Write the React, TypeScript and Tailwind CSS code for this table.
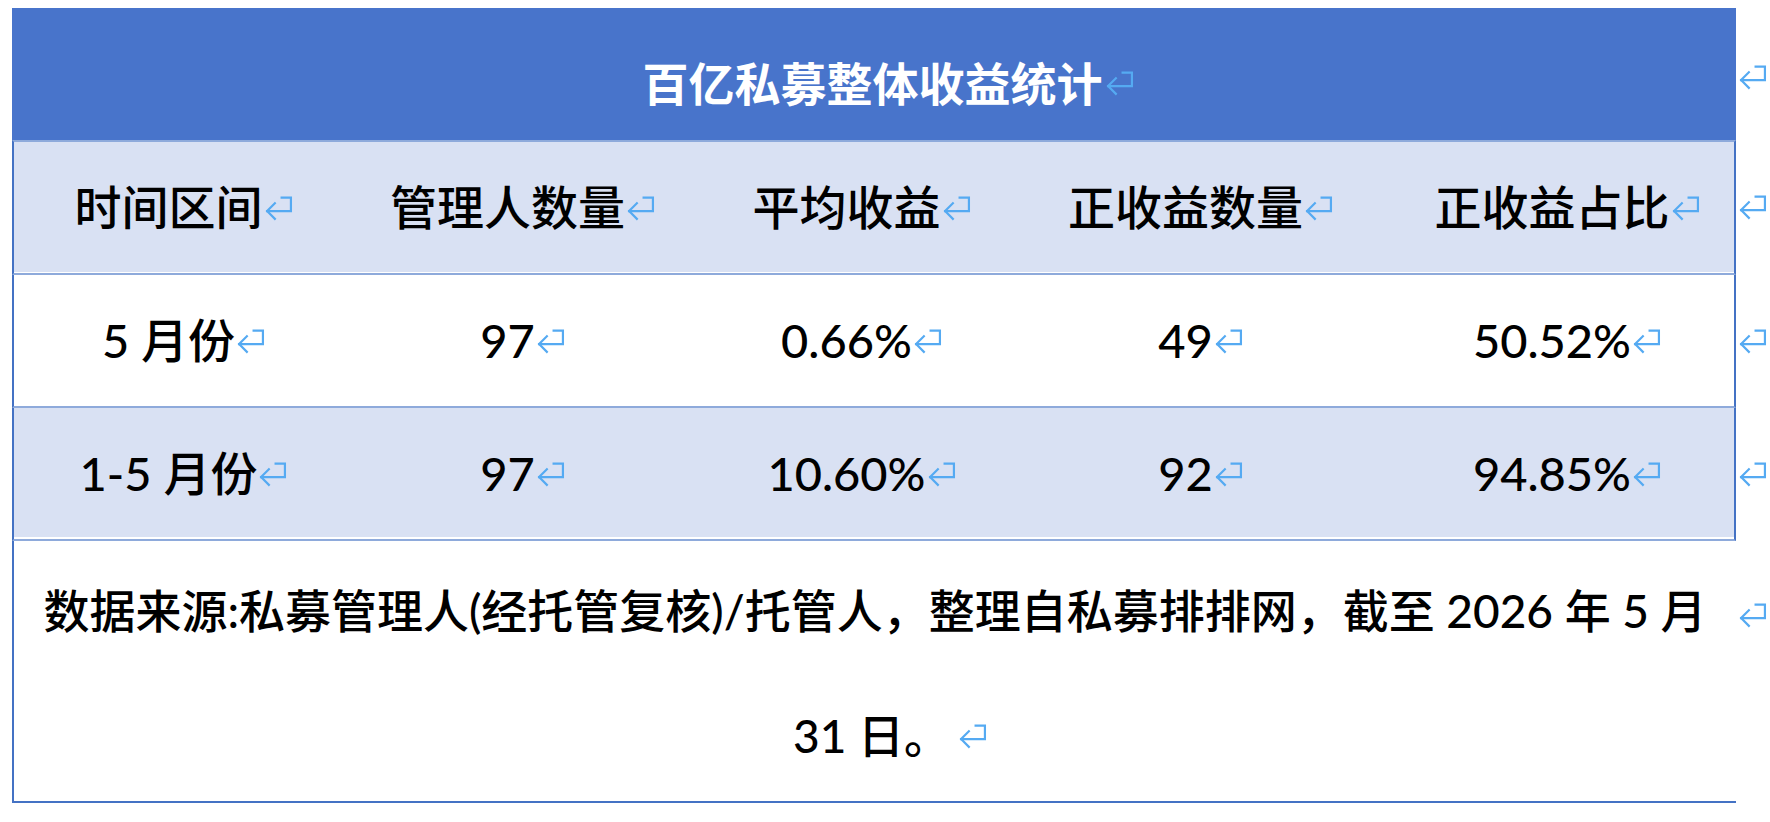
import React from "react";

function Ret({ className = "" }: { className?: string }) {
  return (
    <svg
      className={className}
      width="29"
      height="25"
      viewBox="0 0 28 24"
      fill="none"
      stroke="#55aaf2"
      strokeWidth="2.1"
      strokeLinecap="square"
      strokeLinejoin="miter"
    >
      <path d="M17 1.5H26V14.5H3" />
      <path d="M10.5 7L3 14.5L10.5 22" />
    </svg>
  );
}

function Mark({ offset = "" }: { offset?: string }) {
  return (
    <div className={`flex w-[34px] items-center pl-[2px] ${offset}`}>
      <Ret />
    </div>
  );
}

function Cell({ children, last }: { children: React.ReactNode; last?: boolean }) {
  return (
    <div className={last ? "flex items-center justify-center pl-[30px]" : "flex items-center justify-center"}>
      <span>{children}</span>
      <Ret className="ml-[1px] mt-[2px]" />
    </div>
  );
}

const header = ["时间区间", "管理人数量", "平均收益", "正收益数量", "正收益占比"];
const rows = [
  ["5 月份", "97", "0.66%", "49", "50.52%"],
  ["1-5 月份", "97", "10.60%", "92", "94.85%"],
];

const cols = "grid-cols-[339px_339px_339px_339px_1fr]";

export default function App() {
  return (
    <div
      className="min-h-[822px] w-[1770px] bg-white pl-[12px] pt-[8px] text-black"
      style={{ fontFamily: 'Lato, "Noto Sans CJK SC", sans-serif', fontWeight: 500 }}
    >
      {/* Title row */}
      <div className="flex">
        <div className="flex h-[132px] w-[1724px] items-center justify-center bg-[#4874cb] pl-[28px] pt-[14px]">
          <span
            className="text-[46px] font-bold text-white"
            style={{ fontFamily: '"Noto Sans CJK SC", sans-serif', fontWeight: 700 }}
          >
            百亿私募整体收益统计
          </span>
          <Ret className="ml-[2px] mt-[4px]" />
        </div>
        <Mark offset="pt-[6px]" />
      </div>

      {/* Header row */}
      <div className="flex">
        <div
          className={`grid h-[135px] w-[1724px] ${cols} border-b-2 border-l-2 border-r-2 border-t-2 border-b-[#8eaadb] border-l-[#4472c4] border-r-[#4472c4] border-t-[#8eaadb] bg-[#d9e1f3] text-[47px] shadow-[inset_0_-1px_0_#ffffff]`}
        >
          {header.map((h, j) => (
            <Cell key={h} last={j === 4}>
              {h}
            </Cell>
          ))}
        </div>
        <Mark />
      </div>

      {/* Data rows */}
      {rows.map((r, i) => (
        <div className="flex" key={i}>
          <div
            className={
              i === 1
                ? `grid h-[133px] w-[1724px] ${cols} border-b-2 border-l-2 border-r-2 border-b-[#8eaadb] border-l-[#4472c4] border-r-[#4472c4] bg-[#d9e1f3] text-[47px] shadow-[inset_0_-2px_0_#ffffff]`
                : `grid h-[133px] w-[1724px] ${cols} border-b-2 border-l-2 border-r-2 border-b-[#8eaadb] border-l-[#4472c4] border-r-[#4472c4] bg-white text-[47px]`
            }
          >
            {r.map((c, j) => (
              <Cell key={j} last={j === 4}>
                {c}
              </Cell>
            ))}
          </div>
          <Mark />
        </div>
      ))}

      {/* Footer row */}
      <div className="flex">
        <div className="flex h-[262px] w-[1724px] flex-col items-center justify-center border-b-2 border-l-2 border-b-[#4472c4] border-l-[#4472c4] pt-[4px] text-center text-[46px] leading-[125px]">
          <div className="whitespace-nowrap">
            数据来源:私募管理人(经托管复核)/托管人<span className="inline-block w-[46px] text-center">，</span>整理自私募排排网<span className="inline-block w-[46px] text-center">，</span>截至 2026 年 5 月
          </div>
          <div className="flex items-center whitespace-nowrap pl-[30px]">
            <span>31 日。</span>
            <Ret className="ml-[8px] mt-[2px]" />
          </div>
        </div>
        <div className="flex w-[34px] items-start pl-[2px] pt-[62px]">
          <Ret />
        </div>
      </div>
    </div>
  );
}
